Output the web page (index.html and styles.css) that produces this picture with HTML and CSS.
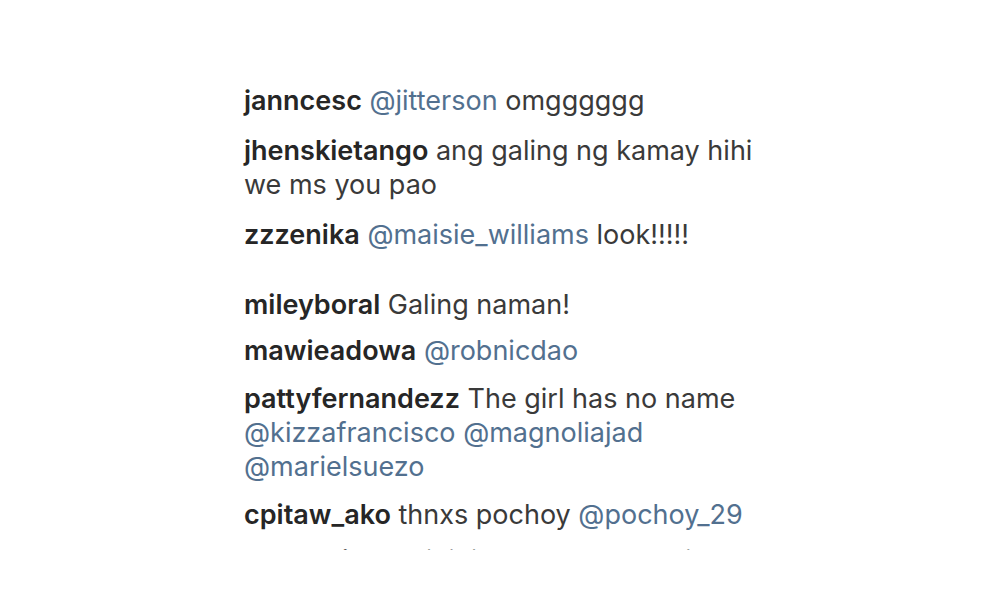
FILE: index.html
```html
<!DOCTYPE html>
<html lang="en">
<head>
  <meta charset="UTF-8" />
  <meta name="viewport" content="width=device-width, initial-scale=1.0" />
  <title>Comments</title>
  <link rel="stylesheet" href="styles.css">
</head>
<body>
  <div class="comments">
    <p class="comment loose"><span class="user">janncesc</span> <span class="tag">@jitterson</span> omgggggg</p>
    <p class="comment loose"><span class="user">jhenskietango</span> ang galing ng kamay hihi<br>we ms you pao</p>
    <p class="comment spaced"><span class="user">zzzenika</span> <span class="tag">@maisie_williams</span> look!!!!!</p>
    <p class="comment tight"><span class="user">mileyboral</span> Galing naman!</p>
    <p class="comment"><span class="user">mawieadowa</span> <span class="tag">@robnicdao</span></p>
    <p class="comment"><span class="user">pattyfernandezz</span> The girl has no name<br><span class="tag">@kizzafrancisco</span> <span class="tag">@magnoliajad</span><br><span class="tag">@marielsuezo</span></p>
    <p class="comment"><span class="user">cpitaw_ako</span> thnxs pochoy <span class="tag">@pochoy_29</span></p>
    <div class="peek">
      <p class="comment"><span class="user">maronsiwa</span> aoinini ewan somean ai wow</p>
    </div>
  </div>
</body>
</html>
```

FILE: styles.css
```css
* { box-sizing: border-box; }

body {
  margin: 0;
  background: #fff;
  font-family: 'Inter', 'Lato', sans-serif;
  color: #3a3a3a;
}

.comments {
  padding: 84px 0 0 244px;
  font-size: 27px;
  line-height: 34px;
}

.comment {
  margin: 0 0 14px;
}

.comment.loose {
  margin-bottom: 16px;
}

.comment.tight {
  margin-bottom: 12px;
}

.comment.spaced {
  margin-bottom: 36px;
}

.user {
  font-weight: 600;
  color: #262626;
}

.tag {
  color: #52708f;
}

/* next comment, cut off by the bottom of the crop */
.peek {
  margin-top: -2px;
  height: 6px;
  overflow: hidden;
}

.peek .comment {
  margin-top: 0;
}
```
